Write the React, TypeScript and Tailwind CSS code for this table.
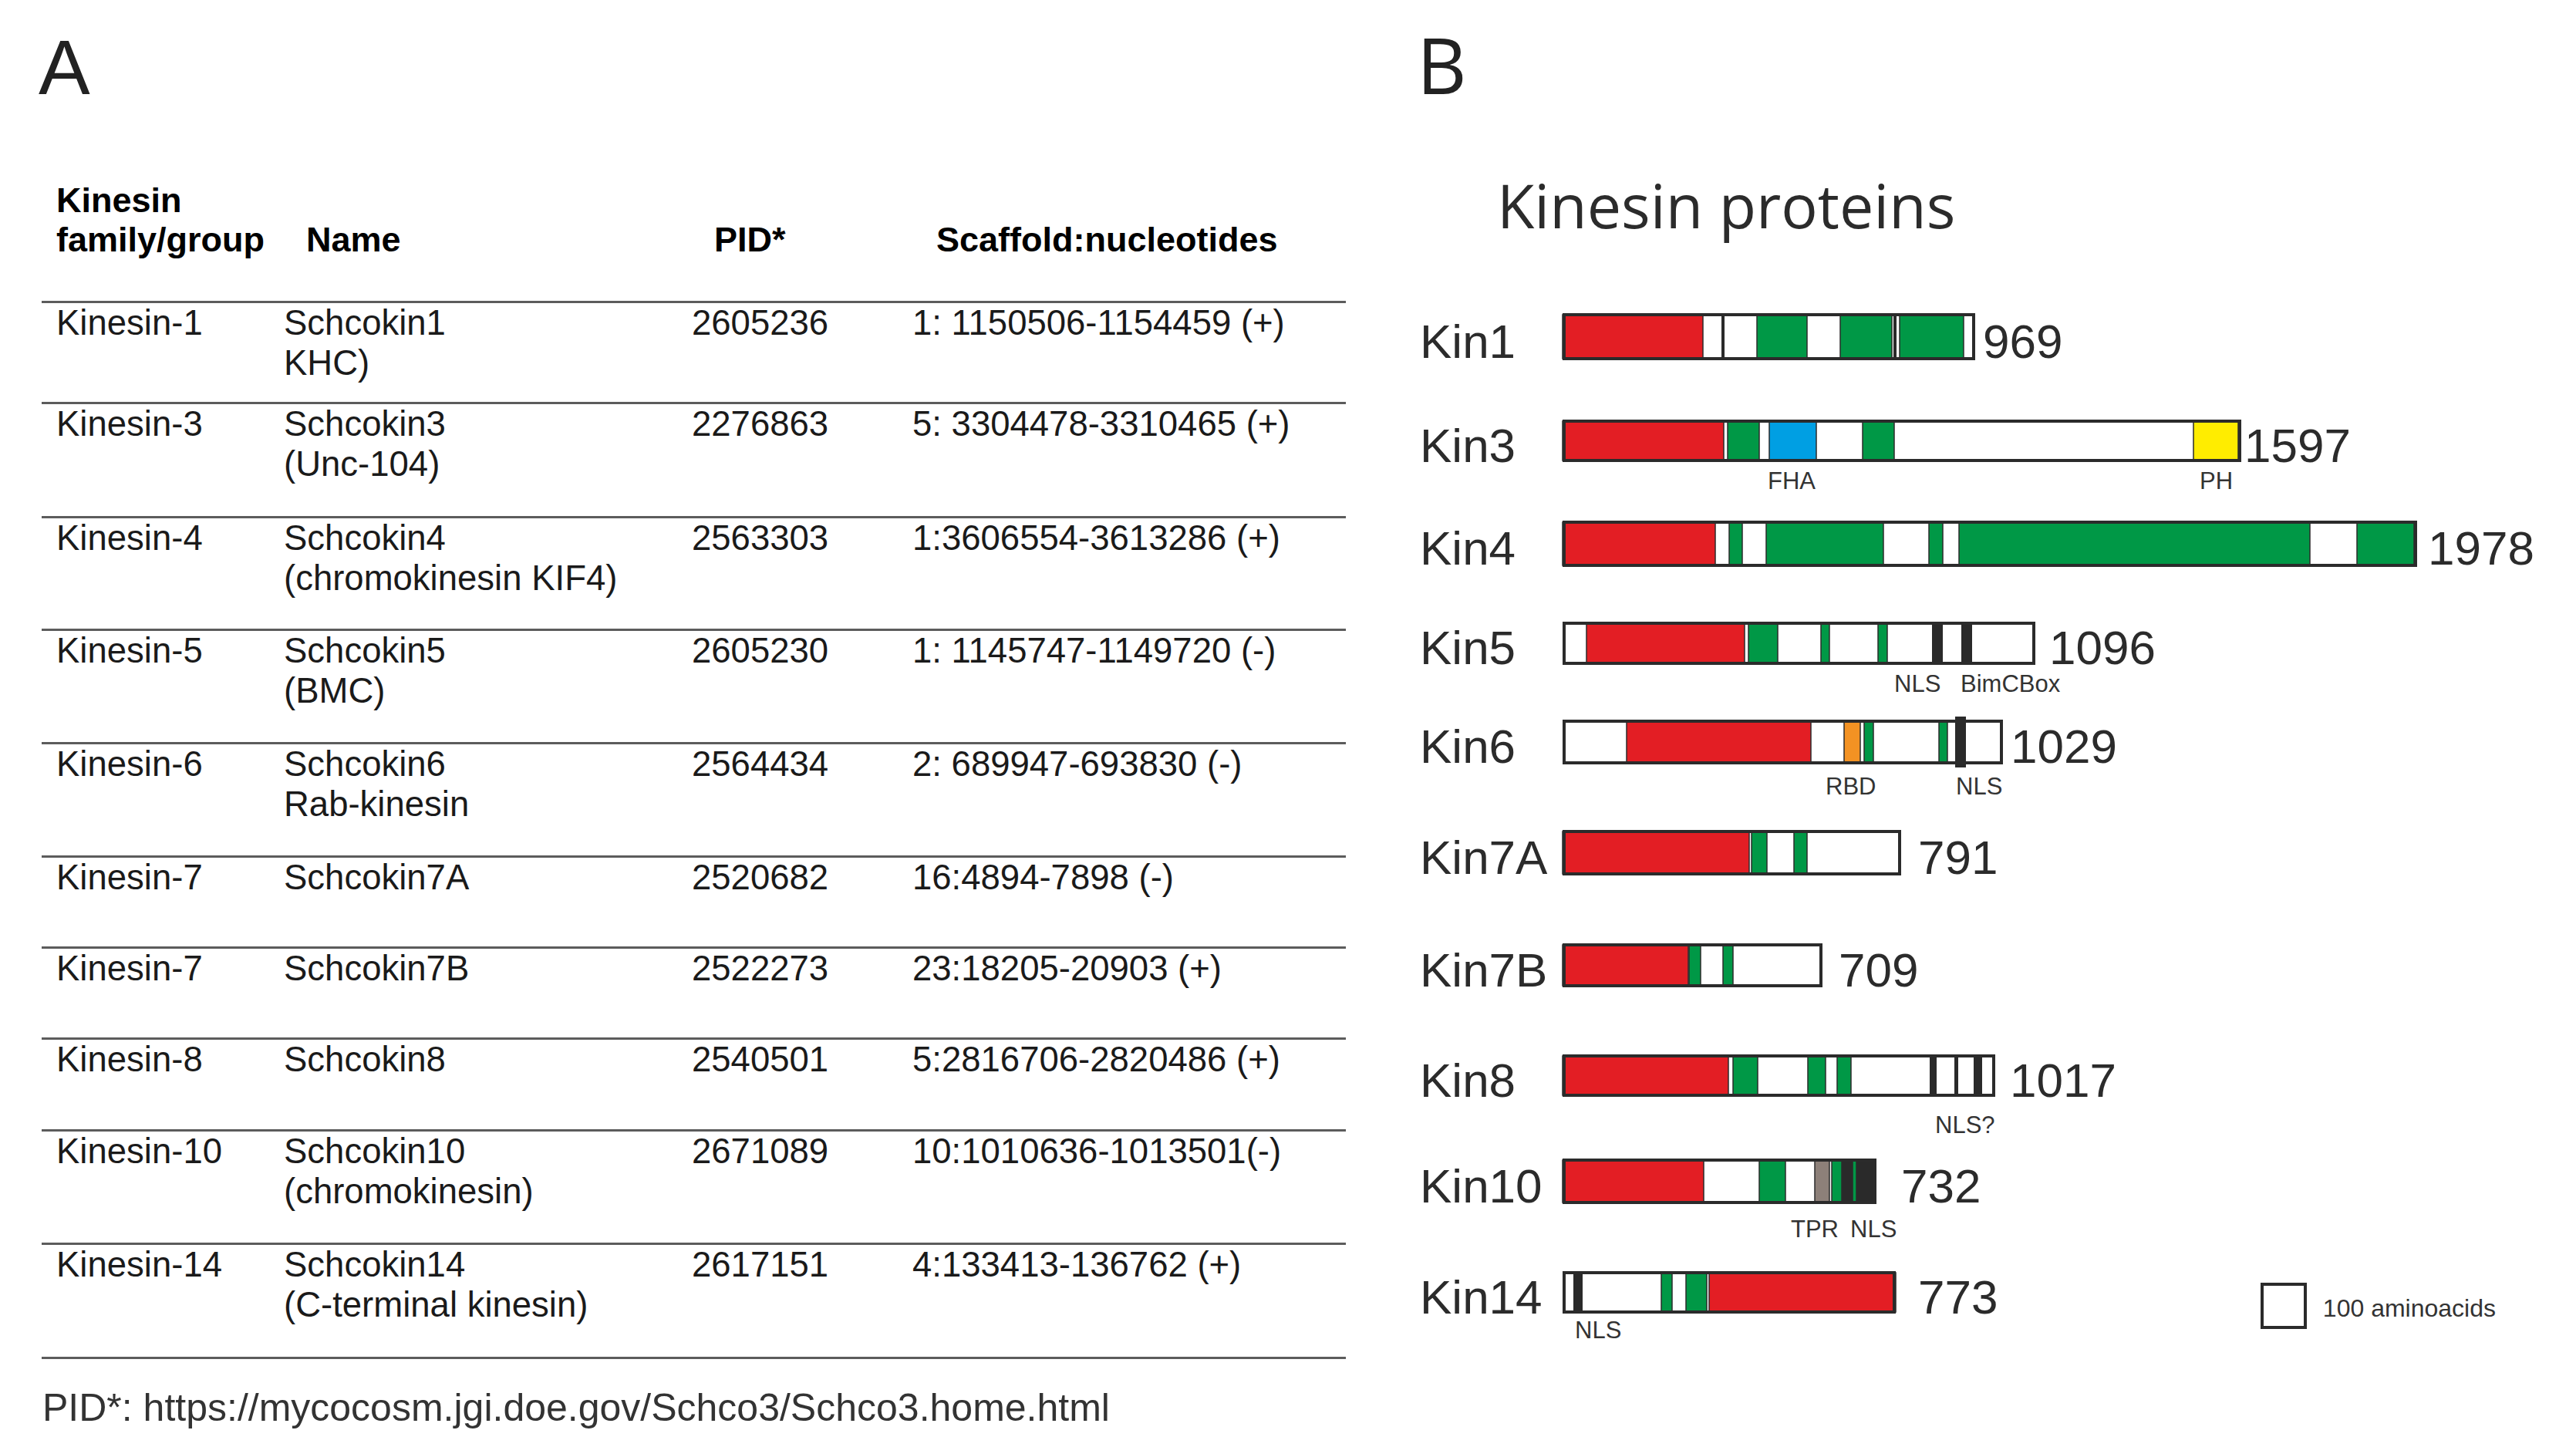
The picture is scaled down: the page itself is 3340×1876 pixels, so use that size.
import React from "react";

const R = "#e31e24";
const G = "#009846";
const B = "#009fe3";
const Y = "#ffed00";
const O = "#f39223";
const T = "#8d8079";
const K = "#2a2a2a";

type Seg = [number, number, string, boolean?];
type Label = { t: string; x: number; top: number };
type BarDef = {
  name: string;
  len: string;
  W: number;
  H: number;
  gap: number;
  mt: number;
  segs: Seg[];
  labels: Label[];
  legend?: boolean;
};

const bars: BarDef[] = [
  {
    name: "Kin1", len: "969", W: 535, H: 61, gap: 10, mt: 0,
    segs: [[0, 182, R], [206, 210, K], [252, 317, G], [360, 427, G], [429, 433, K], [437, 520, G]],
    labels: [],
  },
  {
    name: "Kin3", len: "1597", W: 880, H: 55, gap: 4, mt: 77,
    segs: [[0, 209, R], [214, 255, G], [268, 329, B], [389, 430, G], [818, 876, Y]],
    labels: [{ t: "FHA", x: 266, top: 64 }, { t: "PH", x: 826, top: 64 }],
  },
  {
    name: "Kin4", len: "1978", W: 1108, H: 60, gap: 14, mt: 76,
    segs: [[0, 198, R], [216, 233, G], [264, 416, G], [475, 493, G], [514, 969, G], [1030, 1104, G]],
    labels: [],
  },
  {
    name: "Kin5", len: "1096", W: 613, H: 56, gap: 18, mt: 71,
    segs: [[31, 236, R], [241, 279, G], [335, 346, G], [409, 421, G], [479, 493, K], [517, 531, K]],
    labels: [{ t: "NLS", x: 430, top: 65 }, { t: "BimCBox", x: 516, top: 65 }],
  },
  {
    name: "Kin6", len: "1029", W: 571, H: 58, gap: 10, mt: 71,
    segs: [[83, 322, R], [365, 386, O], [391, 403, G], [488, 499, G], [509, 523, K, true]],
    labels: [{ t: "RBD", x: 341, top: 71 }, { t: "NLS", x: 510, top: 71 }],
  },
  {
    name: "Kin7A", len: "791", W: 439, H: 59, gap: 22, mt: 85,
    segs: [[0, 242, R], [245, 265, G], [300, 317, G]],
    labels: [],
  },
  {
    name: "Kin7B", len: "709", W: 337, H: 57, gap: 21, mt: 88,
    segs: [[0, 163, R], [164, 179, G], [208, 221, G]],
    labels: [],
  },
  {
    name: "Kin8", len: "1017", W: 561, H: 55, gap: 19, mt: 87,
    segs: [[0, 215, R], [221, 253, G], [318, 341, G], [356, 374, G], [476, 485, K], [508, 513, K], [533, 544, K]],
    labels: [{ t: "NLS?", x: 483, top: 76 }],
  },
  {
    name: "Kin10", len: "732", W: 407, H: 59, gap: 32, mt: 80,
    segs: [[0, 183, R], [255, 289, G], [327, 346, T], [349, 362, G], [362, 376, K], [376, 381, G], [381, 407, K]],
    labels: [{ t: "TPR", x: 296, top: 76 }, { t: "NLS", x: 373, top: 76 }],
  },
  {
    name: "Kin14", len: "773", W: 432, H: 55, gap: 29, mt: 87,
    segs: [[14, 26, K], [128, 142, G], [160, 187, G], [190, 432, R]],
    labels: [{ t: "NLS", x: 16, top: 61 }],
    legend: true,
  },
];

type Row = { fam: string; name: string[]; pid: string; sc: string; h: string };

const rows: Row[] = [
  { fam: "Kinesin-1", name: ["Schcokin1", "KHC)"], pid: "2605236", sc: "1: 1150506-1154459 (+)", h: "h-[131px]" },
  { fam: "Kinesin-3", name: ["Schcokin3", "(Unc-104)"], pid: "2276863", sc: "5: 3304478-3310465 (+)", h: "h-[148px]" },
  { fam: "Kinesin-4", name: ["Schcokin4", "(chromokinesin KIF4)"], pid: "2563303", sc: "1:3606554-3613286 (+)", h: "h-[146px]" },
  { fam: "Kinesin-5", name: ["Schcokin5", "(BMC)"], pid: "2605230", sc: "1: 1145747-1149720 (-)", h: "h-[147px]" },
  { fam: "Kinesin-6", name: ["Schcokin6", "Rab-kinesin"], pid: "2564434", sc: "2: 689947-693830 (-)", h: "h-[147px]" },
  { fam: "Kinesin-7", name: ["Schcokin7A"], pid: "2520682", sc: "16:4894-7898 (-)", h: "h-[118px]" },
  { fam: "Kinesin-7", name: ["Schcokin7B"], pid: "2522273", sc: "23:18205-20903 (+)", h: "h-[118px]" },
  { fam: "Kinesin-8", name: ["Schcokin8"], pid: "2540501", sc: "5:2816706-2820486 (+)", h: "h-[119px]" },
  { fam: "Kinesin-10", name: ["Schcokin10", "(chromokinesin)"], pid: "2671089", sc: "10:1010636-1013501(-)", h: "h-[147px]" },
  { fam: "Kinesin-14", name: ["Schcokin14", "(C-terminal kinesin)"], pid: "2617151", sc: "4:133413-136762 (+)", h: "h-[148px]" },
];

function Bar({ bar }: { bar: BarDef }) {
  const { W, H } = bar;
  return (
    <div className="relative shrink-0" style={{ width: W, height: H }}>
      <svg width={W} height={H} className="block overflow-visible">
        <rect x={2} y={2} width={W - 4} height={H - 4} fill="#ffffff" />
        {bar.segs.map(([a, b, c, ext], i) => (
          <rect
            key={i}
            x={a}
            y={ext ? -4 : 2}
            width={b - a}
            height={ext ? H + 8 : H - 4}
            fill={c}
            stroke={c === K ? "none" : "#2b2b2b"}
            strokeWidth={1.5}
          />
        ))}
        <rect x={2} y={2} width={W - 4} height={H - 4} fill="none" stroke="#2b2b2b" strokeWidth={4} />
      </svg>
      {bar.labels.map((l, i) => (
        <span
          key={i}
          className="absolute whitespace-nowrap text-[31px] leading-none text-[#333333]"
          style={{ left: l.x, top: l.top }}
        >
          {l.t}
        </span>
      ))}
    </div>
  );
}

export default function App() {
  return (
    <div
      className="w-[3340px] h-[1876px] bg-white flex overflow-hidden"
      style={{ fontFamily: '"Liberation Sans", Arial, sans-serif' }}
    >
      {/* Panel A */}
      <section className="w-[1837px] shrink-0 pt-[37px] flex flex-col">
        <div className="ml-[50px] text-[100px] leading-none text-[#222222]">A</div>

        <div className="ml-[54px] w-[1691px] mt-[97px] text-[#1a1a1a]">
          <div className="grid grid-cols-[314px_529px_283px_1fr] items-end pb-[54px] text-[45px] leading-[51px] font-bold text-black">
            <div className="pl-[19px]">
              Kinesin
              <br />
              family/group
            </div>
            <div className="pl-[29px]">Name</div>
            <div className="pl-[29px]">PID*</div>
            <div className="pl-[34px]">Scaffold:nucleotides</div>
          </div>

          <div className="border-b-[3px] border-[#5c5c5c]">
            {rows.map((r, i) => (
              <div
                key={i}
                className={`grid grid-cols-[314px_529px_283px_1fr] border-t-[3px] border-[#5c5c5c] text-[45.5px] leading-[52px] ${r.h}`}
              >
                <div className="pl-[19px]">{r.fam}</div>
                <div>
                  {r.name.map((n, j) => (
                    <div key={j}>{n}</div>
                  ))}
                </div>
                <div>{r.pid}</div>
                <div className="pl-[3px]">{r.sc}</div>
              </div>
            ))}
          </div>
        </div>

        <div className="ml-[55px] mt-[38px] text-[50px] leading-none text-[#333333] whitespace-nowrap">
          PID*: https://mycocosm.jgi.doe.gov/Schco3/Schco3.home.html
        </div>
      </section>

      {/* Panel B */}
      <section className="flex-1 pt-[33px] flex flex-col">
        <div
          className="text-[100px] leading-none text-[#222222]"
          style={{ fontFamily: '"Open Sans", sans-serif' }}
        >
          B
        </div>
        <div
          className="ml-[104px] mt-[93px] text-[79px] leading-none text-[#2b2b2b]"
          style={{ fontFamily: '"Open Sans", sans-serif' }}
        >
          Kinesin proteins
        </div>

        <div className="mt-[101px] ml-[4px] flex flex-col">
          {bars.map((b) => (
            <div
              key={b.name}
              className="flex items-center"
              style={{ height: b.H, marginTop: b.mt }}
            >
              <div className="w-[185px] shrink-0 mt-[12px] text-[62px] leading-[62px] text-[#2b2b2b] whitespace-nowrap">
                {b.name}
              </div>
              <Bar bar={b} />
              <div
                className="shrink-0 mt-[12px] text-[62px] leading-[62px] text-[#2b2b2b]"
                style={{ marginLeft: b.gap }}
              >
                {b.len}
              </div>
              {b.legend && (
                <div className="ml-auto mr-[104px] mt-[35px] flex items-center gap-[21px]">
                  <div className="w-[60px] h-[60px] border-[4px] border-[#2b2b2b] bg-white" />
                  <span className="mt-[6px] text-[32px] leading-none text-[#333333] whitespace-nowrap">
                    100 aminoacids
                  </span>
                </div>
              )}
            </div>
          ))}
        </div>
      </section>
    </div>
  );
}
